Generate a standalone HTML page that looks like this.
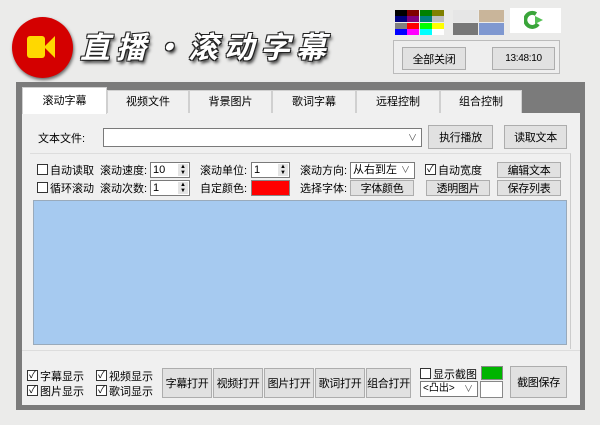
<!DOCTYPE html>
<html><head><meta charset="utf-8"><style>
*{box-sizing:border-box;margin:0;padding:0}
body{width:600px;height:425px;background:#ebebea;font-family:"Liberation Sans","Noto Sans CJK SC",sans-serif;font-size:11px;color:#000;position:relative;overflow:hidden}
.a{position:absolute}
.btn{position:absolute;background:#e1e1e1;border:1px solid #adadad;text-align:center;font-size:11px;display:flex;align-items:center;justify-content:center;white-space:nowrap;letter-spacing:-0.3px;overflow:hidden}
.lbl{position:absolute;font-size:11px;white-space:nowrap}
.cb{position:absolute;width:11px;height:11px;border:1px solid #333;background:#fff;font-size:10px;line-height:9px;text-align:center}
.inp{position:absolute;background:#fff;border:1px solid #7a7a7a;font-size:11px;padding-left:2px}
.tab{position:absolute;top:90px;height:23px;background:#f0f0f0;border:1px solid #d0d0d0;border-bottom:none;text-align:center;line-height:22px;font-size:11px}
.pal div{position:absolute;width:12px;height:6px}
</style></head><body>
<div class="a" style="left:12px;top:17px;width:61px;height:61px;border-radius:50%;background:#d40000;box-shadow:1px 2px 3px #666"></div>
<div class="a" style="left:27px;top:36px;width:18px;height:22px;background:#ffd800;border-radius:3px"></div>
<div class="a" style="left:44px;top:36px;width:0;height:0;border-right:11px solid #ffd800;border-top:11px solid transparent;border-bottom:11px solid transparent"></div>
<div class="a" style="left:80px;top:23px;font-size:30px;font-weight:bold;font-style:italic;color:#fff;letter-spacing:6px;text-shadow:1px 1px 0 #222,-1px -1px 0 #222,1px -1px 0 #222,-1px 1px 0 #222,2px 3px 3px #333;font-family:'Noto Sans CJK SC',sans-serif;white-space:nowrap">直播·滚动字幕</div>
<div class="a pal" style="left:395px;top:10px;width:50px;height:26px">
<div style="left:0;top:0;background:#000"></div><div style="left:12px;top:0;background:#800000"></div><div style="left:25px;top:0;background:#008000"></div><div style="left:37px;top:0;background:#808000"></div>
<div style="left:0;top:6px;background:#000080"></div><div style="left:12px;top:6px;background:#800080"></div><div style="left:25px;top:6px;background:#008080"></div><div style="left:37px;top:6px;background:#c0c0c0"></div>
<div style="left:0;top:13px;background:#808080"></div><div style="left:12px;top:13px;background:#f00"></div><div style="left:25px;top:13px;background:#0f0"></div><div style="left:37px;top:13px;background:#ff0"></div>
<div style="left:0;top:19px;background:#00f"></div><div style="left:12px;top:19px;background:#f0f"></div><div style="left:25px;top:19px;background:#0ff"></div><div style="left:37px;top:19px;background:#fff"></div>
</div>
<div class="a" style="left:453px;top:10px;width:25px;height:12px;background:#e6e6e6"></div>
<div class="a" style="left:479px;top:10px;width:25px;height:12px;background:#c9b59a"></div>
<div class="a" style="left:453px;top:23px;width:25px;height:12px;background:#777"></div>
<div class="a" style="left:479px;top:23px;width:25px;height:12px;background:#7f98d0"></div>
<div class="a" style="left:510px;top:8px;width:51px;height:25px;background:#fff"></div>
<svg class="a" style="left:524px;top:10px" width="22" height="20" viewBox="0 0 22 20"><path d="M12 4 A7 7 0 1 0 14 14" fill="none" stroke="#3aa53a" stroke-width="4"/><path d="M11 6 L19 10 L11 14 Z" fill="#55c055"/></svg>
<div class="a" style="left:393px;top:40px;width:167px;height:34px;border:1px solid #bbb;background:#eee"></div>
<div class="btn" style="left:402px;top:47px;width:64px;height:23px">全部关闭</div>
<div class="btn" style="left:492px;top:47px;width:63px;height:23px;font-size:10px">13:48:10</div>
<div class="a" style="left:16px;top:82px;width:569px;height:328px;background:#7b7b7b"></div>
<div class="tab" style="left:22px;top:87px;width:85px;height:27px;background:#fff;line-height:26px;z-index:2">滚动字幕</div>
<div class="tab" style="left:107px;width:82px">视频文件</div>
<div class="tab" style="left:189px;width:83px">背景图片</div>
<div class="tab" style="left:272px;width:84px">歌词字幕</div>
<div class="tab" style="left:356px;width:84px">远程控制</div>
<div class="tab" style="left:440px;width:82px">组合控制</div>
<div class="a" style="left:22px;top:113px;width:558px;height:292px;background:#f0f0f0"></div>
<div class="lbl" style="left:38px;top:130px">文本文件:</div>
<div class="inp" style="left:103px;top:128px;width:319px;height:19px"><span style="position:absolute;right:4px;top:2px;color:#555;font-size:9px">∨</span></div>
<div class="btn" style="left:428px;top:125px;width:65px;height:24px">执行播放</div>
<div class="btn" style="left:504px;top:125px;width:63px;height:24px">读取文本</div>
<div class="a" style="left:30px;top:153px;width:541px;height:196px;border-right:1px solid #ccc;border-top:1px solid #ddd"></div>
<div class="cb" style="left:37px;top:164px"></div><div class="lbl" style="left:50px;top:162px">自动读取</div>
<div class="lbl" style="left:100px;top:162px">滚动速度:</div>
<div class="inp" style="left:150px;top:162px;width:40px;height:16px;line-height:14px">10<span style="position:absolute;right:1px;top:1px;width:10px;height:12px;background:#e4e4e4;font-size:6px;line-height:6px;text-align:center">▲<br>▼</span></div>
<div class="lbl" style="left:200px;top:162px">滚动单位:</div>
<div class="inp" style="left:251px;top:162px;width:39px;height:16px;line-height:14px">1<span style="position:absolute;right:1px;top:1px;width:10px;height:12px;background:#e4e4e4;font-size:6px;line-height:6px;text-align:center">▲<br>▼</span></div>
<div class="lbl" style="left:300px;top:162px">滚动方向:</div>
<div class="inp" style="left:350px;top:162px;width:65px;height:17px;line-height:15px">从右到左<span style="position:absolute;right:4px;top:0;color:#555;font-size:9px">∨</span></div>
<div class="cb" style="left:425px;top:164px">✓</div><div class="lbl" style="left:438px;top:162px">自动宽度</div>
<div class="btn" style="left:497px;top:162px;width:64px;height:16px">编辑文本</div>
<div class="cb" style="left:37px;top:182px"></div><div class="lbl" style="left:50px;top:180px">循环滚动</div>
<div class="lbl" style="left:100px;top:180px">滚动次数:</div>
<div class="inp" style="left:150px;top:180px;width:40px;height:16px;line-height:14px">1<span style="position:absolute;right:1px;top:1px;width:10px;height:12px;background:#e4e4e4;font-size:6px;line-height:6px;text-align:center">▲<br>▼</span></div>
<div class="lbl" style="left:200px;top:180px">自定颜色:</div>
<div class="a" style="left:251px;top:180px;width:39px;height:16px;background:#f00;border:1px solid #888"></div>
<div class="lbl" style="left:300px;top:180px">选择字体:</div>
<div class="btn" style="left:350px;top:180px;width:64px;height:16px">字体颜色</div>
<div class="btn" style="left:426px;top:180px;width:64px;height:16px">透明图片</div>
<div class="btn" style="left:497px;top:180px;width:64px;height:16px">保存列表</div>
<div class="a" style="left:33px;top:200px;width:534px;height:145px;background:#a6caf0;border:1px solid #9ab"></div>
<div class="a" style="left:22px;top:350px;width:558px;height:1px;background:#ddd"></div>
<div class="cb" style="left:27px;top:370px">✓</div><div class="lbl" style="left:40px;top:368px">字幕显示</div>
<div class="cb" style="left:96px;top:370px">✓</div><div class="lbl" style="left:109px;top:368px">视频显示</div>
<div class="cb" style="left:27px;top:385px">✓</div><div class="lbl" style="left:40px;top:383px">图片显示</div>
<div class="cb" style="left:96px;top:385px">✓</div><div class="lbl" style="left:109px;top:383px">歌词显示</div>
<div class="btn" style="left:162px;top:368px;width:50px;height:30px">字幕打开</div>
<div class="btn" style="left:213px;top:368px;width:50px;height:30px">视频打开</div>
<div class="btn" style="left:264px;top:368px;width:50px;height:30px">图片打开</div>
<div class="btn" style="left:315px;top:368px;width:50px;height:30px">歌词打开</div>
<div class="btn" style="left:366px;top:368px;width:45px;height:30px">组合打开</div>
<div class="cb" style="left:420px;top:368px"></div><div class="lbl" style="left:433px;top:366px">显示截图</div>
<div class="a" style="left:481px;top:366px;width:22px;height:14px;background:#00b400;border:1px solid #888"></div>
<div class="inp" style="left:420px;top:381px;width:58px;height:16px;line-height:14px;font-size:10px">&lt;凸出&gt;<span style="position:absolute;right:4px;top:0;color:#555;font-size:9px">∨</span></div>
<div class="a" style="left:480px;top:381px;width:23px;height:17px;background:#fff;border:1px solid #888"></div>
<div class="btn" style="left:510px;top:366px;width:57px;height:32px">截图保存</div>
</body></html>
